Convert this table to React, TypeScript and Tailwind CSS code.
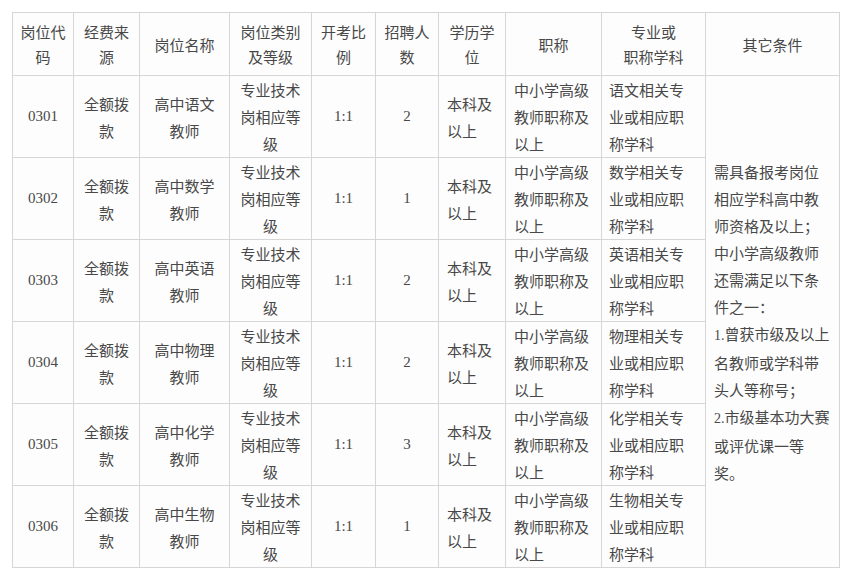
import React from "react";

const widths = [61, 66, 90, 82, 64, 63, 67, 96, 104, 134];

const headers: string[][] = [
  ["岗位代", "码"],
  ["经费来", "源"],
  ["岗位名称"],
  ["岗位类别", "及等级"],
  ["开考比", "例"],
  ["招聘人", "数"],
  ["学历学", "位"],
  ["职称"],
  ["专业或", "职称学科"],
  ["其它条件"],
];

const rows = [
  { code: "0301", name: "高中语文", n: "2", subj: "语文" },
  { code: "0302", name: "高中数学", n: "1", subj: "数学" },
  { code: "0303", name: "高中英语", n: "2", subj: "英语" },
  { code: "0304", name: "高中物理", n: "2", subj: "物理" },
  { code: "0305", name: "高中化学", n: "3", subj: "化学" },
  { code: "0306", name: "高中生物", n: "1", subj: "生物" },
];

const cjk = "font-['Noto_Sans_CJK_SC',sans-serif]";
const serif = "font-['Liberation_Serif','Noto_Sans_CJK_SC',serif]";
const td = "border border-[#d6d6d6] align-middle p-0 leading-[27px] text-[15px]";

function Lines({ lines }: { lines: string[] }) {
  return (
    <>
      {lines.map((l, i) => (
        <span key={i} className="block whitespace-nowrap">
          {l}
        </span>
      ))}
    </>
  );
}

function L({ children }: { children: React.ReactNode }) {
  return <span className="block whitespace-nowrap">{children}</span>;
}

export default function App() {
  return (
    <div className={`bg-white w-[848px] h-[575px] pt-[12px] pl-[12px] text-[#484848] ${cjk}`}>
      <table className="table-fixed border-collapse bg-[#fdfdfd] w-[827px]">
        <colgroup>
          {widths.map((w, i) => (
            <col key={i} style={{ width: w }} />
          ))}
        </colgroup>
        <thead>
          <tr className="h-[63px]">
            {headers.map((h, i) => (
              <th
                key={i}
                className="border border-[#d6d6d6] align-middle font-normal text-center text-[15px] leading-[25px] px-1 py-[6px]"
              >
                <Lines lines={h} />
              </th>
            ))}
          </tr>
        </thead>
        <tbody>
          {rows.map((r, i) => (
            <tr key={r.code} className="h-[82px]">
              <td className={`${td} text-center text-[14px] ${serif}`}>{r.code}</td>
              <td className={`${td} text-center`}>
                <Lines lines={["全额拨", "款"]} />
              </td>
              <td className={`${td} text-center`}>
                <Lines lines={[r.name, "教师"]} />
              </td>
              <td className={`${td} text-center`}>
                <Lines lines={["专业技术", "岗相应等", "级"]} />
              </td>
              <td className={`${td} text-center text-[14px] ${serif}`}>1:1</td>
              <td className={`${td} text-center text-[14px] ${serif}`}>{r.n}</td>
              <td className={`${td} text-left pl-[8px]`}>
                <Lines lines={["本科及", "以上"]} />
              </td>
              <td className={`${td} text-left pl-[8px]`}>
                <Lines lines={["中小学高级", "教师职称及", "以上"]} />
              </td>
              <td className={`${td} text-left pl-[7px]`}>
                <Lines lines={[r.subj + "相关专", "业或相应职", "称学科"]} />
              </td>
              {i === 0 && (
                <td rowSpan={6} className={`${td} text-left pl-[8px]`}>
                  <L>需具备报考岗位</L>
                  <L>相应学科高中教</L>
                  <L>师资格及以上；</L>
                  <L>中小学高级教师</L>
                  <L>还需满足以下条</L>
                  <L>件之一：</L>
                  <L>
                    <span className={`${serif} text-[14px]`}>1.</span>曾获市级及以上
                  </L>
                  <L>名教师或学科带</L>
                  <L>头人等称号；</L>
                  <L>
                    <span className={`${serif} text-[14px]`}>2.</span>市级基本功大赛
                  </L>
                  <L>或评优课一等</L>
                  <L>奖。</L>
                </td>
              )}
            </tr>
          ))}
        </tbody>
      </table>
    </div>
  );
}
